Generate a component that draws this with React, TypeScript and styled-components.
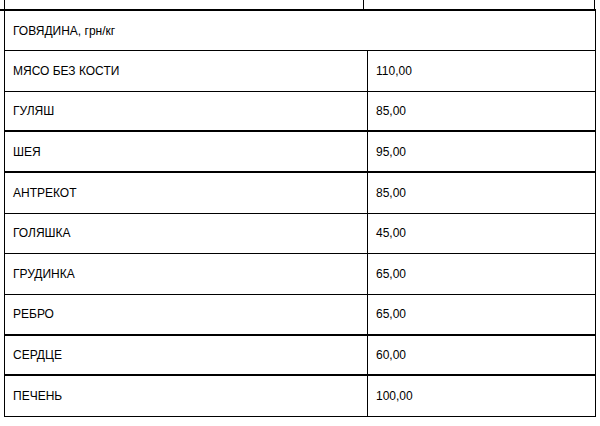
import React from 'react';
import styled, { createGlobalStyle } from 'styled-components';

const GlobalStyle = createGlobalStyle`
  body {
    margin: 0;
    background: #fff;
    font-family: "Liberation Sans", Arial, sans-serif;
  }
  * {
    box-sizing: border-box;
  }
`;

const Page = styled.div`
  width: 600px;
  height: 426px;
  overflow: hidden;
`;

const PrevRow = styled.div`
  display: grid;
  grid-template-columns: 359px 1fr;
  width: 591px;
  height: 9px;
  margin-left: 4px;
  border-left: 1px solid #000;
  border-right: 1px solid #000;
`;

const PrevCell = styled.div`
  border-right: 1px solid #000;
`;

const Rule = styled.div`
  width: 596px;
  height: 2px;
  background: #000;
`;

const Table = styled.div`
  width: 592px;
  margin-left: 4px;
  font-size: 12px;
  color: #000;
`;

const Row = styled.div<{ $head?: boolean; $thick?: boolean }>`
  display: grid;
  grid-template-columns: ${(p) => (p.$head ? '1fr' : '362px 1fr')};
  height: ${(p) => (p.$head ? '40px' : '40.67px')};
  border-left: 1px solid #000;
  border-right: 1px solid #000;
  border-bottom: ${(p) => (p.$thick ? '2px' : '1px')} solid #000;
`;

const Cell = styled.div<{ $divided?: boolean }>`
  display: flex;
  align-items: center;
  padding-left: 8px;
  border-left: ${(p) => (p.$divided ? '1px solid #000' : 'none')};
`;

const rows: [string, string, boolean][] = [
  ['МЯСО БЕЗ КОСТИ', '110,00', false],
  ['ГУЛЯШ', '85,00', true],
  ['ШЕЯ', '95,00', true],
  ['АНТРЕКОТ', '85,00', false],
  ['ГОЛЯШКА', '45,00', false],
  ['ГРУДИНКА', '65,00', false],
  ['РЕБРО', '65,00', true],
  ['СЕРДЦЕ', '60,00', true],
  ['ПЕЧЕНЬ', '100,00', false],
];

export default function App() {
  return (
    <Page>
      <GlobalStyle />
      <PrevRow>
        <PrevCell />
        <div />
      </PrevRow>
      <Rule />
      <Table>
        <Row $head>
          <Cell>ГОВЯДИНА, грн/кг</Cell>
        </Row>
        {rows.map(([name, price, thick]) => (
          <Row key={name} $thick={thick}>
            <Cell>{name}</Cell>
            <Cell $divided>{price}</Cell>
          </Row>
        ))}
      </Table>
    </Page>
  );
}
